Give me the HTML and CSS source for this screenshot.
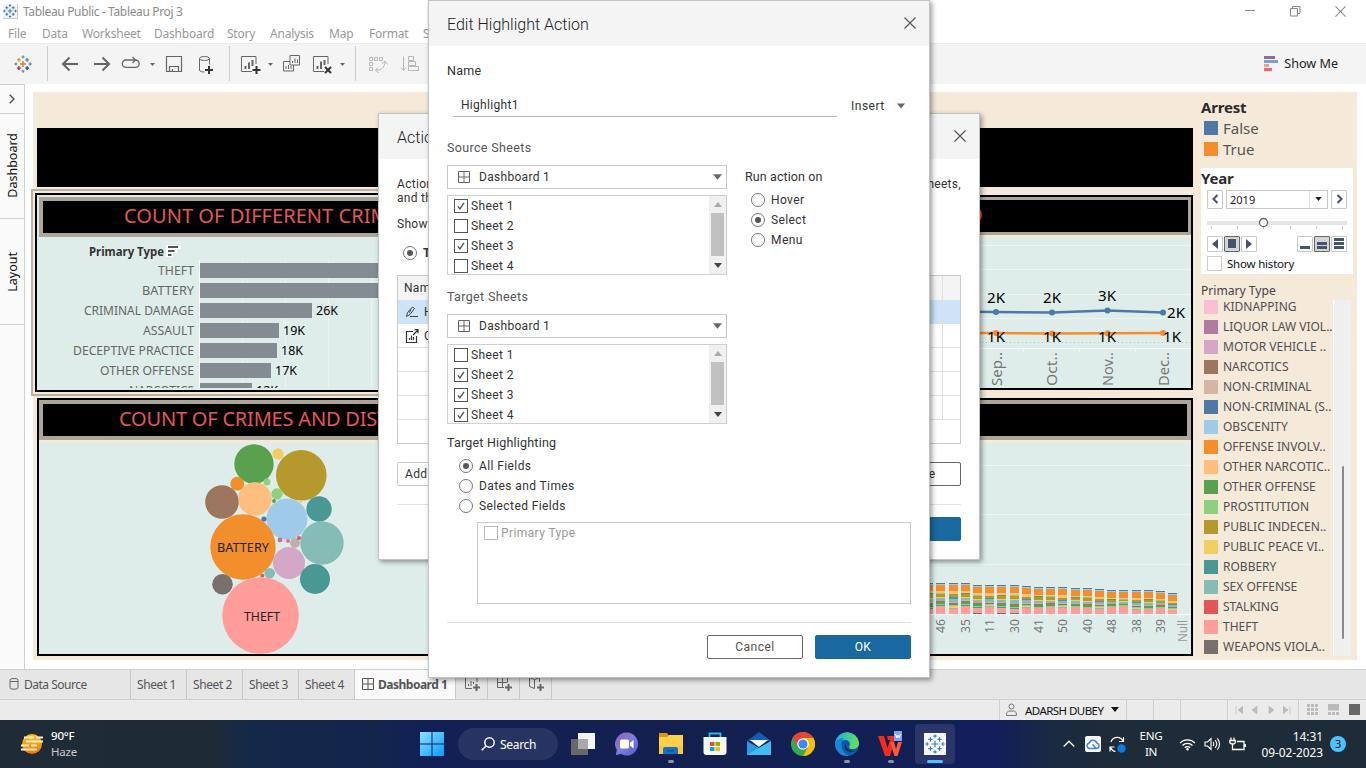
FILE: index.html
```html
<!DOCTYPE html>
<html lang="en">
<head>
<meta charset="utf-8">
<title>Tableau Public - Tableau Proj 3</title>
<link rel="stylesheet" href="styles.css">
</head>
<body>
<svg class="sprite" width="0" height="0">
  <symbol id="i-close" viewBox="0 0 12 12"><path d="M.5.5l11 11M11.5.5l-11 11" fill="none" stroke="currentColor" stroke-width="1.1"/></symbol>
  <symbol id="i-grid" viewBox="0 0 12 12"><path d="M.5.5h11v11H.5zM6 .5v11M.5 6h11" fill="none" stroke="currentColor"/></symbol>
  <symbol id="i-tri" viewBox="0 0 8 5"><path d="M0 0h8L4 5z" fill="currentColor"/></symbol>
  <symbol id="i-check" viewBox="0 0 14 14"><path d="M3.3 7.4l2.4 3 4.8-7" fill="none" stroke="#555" stroke-width="1.6"/></symbol>
  <symbol id="i-flake" viewBox="0 0 24 24">
    <path d="M12 8v8M8 12h8" class="c1"/><path d="M6.500 4v5M4 6.500h5" class="c2"/><path d="M17.500 4v5M15 6.500h5" class="c3"/>
    <path d="M6.500 15v5M4 17.500h5" class="c4"/><path d="M17.500 15v5M15 17.500h5" class="c5"/>
    <path d="M12 .5v4M10 2.500h4" class="c6"/><path d="M12 19.500v4M10 21.500h4" class="c7"/><path d="M2.500 10v4M.5 12h4" class="c6"/><path d="M21.500 10v4M19.500 12h4" class="c7"/>
  </symbol>
</svg>

<div class="app">
  <header class="titlebar">
    <svg class="app-icon flake-blue" width="15" height="15"><use href="#i-flake"/></svg>
    <span class="app-title">Tableau Public - Tableau Proj 3</span>
    <div class="win-controls">
      <svg width="12" height="12" viewBox="0 0 12 12"><path d="M0 4.500h10" stroke="#888"/></svg>
      <svg width="12" height="12" viewBox="0 0 12 12"><path d="M.5 2.500h7v7.500h-7zM2.500 2.500V.5h7.500V7.500h-2.500" fill="none" stroke="#888"/></svg>
      <svg class="grey" width="11" height="11"><use href="#i-close"/></svg>
    </div>
  </header>
  <nav class="menubar"><span>File</span><span>Data</span><span>Worksheet</span><span>Dashboard</span><span>Story</span><span>Analysis</span><span>Map</span><span>Format</span><span>Server</span></nav>

  <div class="toolbar">
    <svg class="flake-multi" width="18" height="18"><use href="#i-flake"/></svg>
    <i class="sep s1"></i>
    <svg class="tool w32" viewBox="0 0 32 24"><path d="M24 12H9M15.500 5.500L9 12l6.500 6.500" stroke-width="2"/></svg>
    <svg class="tool w32" viewBox="0 0 32 24"><path d="M8 12h15M16.500 5.500L23 12l-6.500 6.500" stroke-width="2"/></svg>
    <svg class="tool w44" viewBox="3 0 44 24"><path d="M15 8h-4a3.700 3.700 0 0 0 0 7.400h9.500a3.700 3.700 0 0 0 0-7.400H15M17.500 5l3 3-3 3" stroke-width="1.300"/><path class="fill" d="M35 11h5l-2.500 3z"/></svg>
    <svg class="tool w32" viewBox="3 0 32 24"><path d="M7.500 4.500h15v15h-15zM10.500 19v-4.500h9V19M13.500 17v2" stroke-width="1.200"/></svg>
    <svg class="tool w35" viewBox="3 0 35 24"><ellipse cx="13.500" cy="6.500" rx="5" ry="2"/><path d="M8.500 6.500v11.500c0 1.500 2 2 5 2M18.500 6.500v6"/><path class="dark" d="M18 14v8M14 18h8"/></svg>
    <i class="sep"></i>
    <svg class="tool w48" viewBox="0 0 48 24"><path d="M26 12V4.500H11.500v15H22"/><path d="M15.500 17v-3M19 17v-6.500M22.500 14V8" stroke-width="2"/><path class="dark" d="M26.500 14v8M22.500 18h8"/><path class="fill" d="M38 11h5l-2.500 3z"/></svg>
    <svg class="tool w28" viewBox="0 0 28 24"><path d="M12 3.500h9.500v9.500H12zM12 9.500H5.500v9.500h10v-6M14.500 11V9M17 11V6.500M19.500 11V7.500M8 17v-3M10.500 17v-4M13 17v-3"/></svg>
    <svg class="tool w49" viewBox="1 0 49 24"><path d="M23 12V4.500H8.500v15H19"/><path d="M12.500 17v-3M16 17V9.500M19.500 13V8" stroke-width="2"/><path class="dark" d="M20 15l6 6M26 15l-6 6"/><path class="fill" d="M35 11h5l-2.500 3z"/></svg>
    <i class="sep"></i>
    <svg class="tool off w38" viewBox="0 0 38 24"><path d="M13.500 5.500h3v3h-3zM18.500 5.500h3v3h-3zM23.500 5.500h3v3h-3zM13.500 10.500h3v3h-3zM13.500 15.500h3v3h-3zM20 18c6 0 8-2 9-8M26 12l3-3 2.500 3.500M22 15.500L19.500 18l3 3"/></svg>
    <svg class="tool off w32" viewBox="0 0 32 24"><path d="M9.500 4.500v14M7 15.500L9.500 18.500l2.500-3M14.500 4.500h5v4h-5zM14.500 9.500h7v4h-7zM14.500 14.500h10v4h-10z"/></svg>
    <div class="showme">
      <svg width="14" height="15" viewBox="0 0 14 15"><path fill="#8a6d9b" d="M0 0h11v3H0z"/><path fill="#7f9fcb" d="M0 4h14v3H0z"/><path fill="#f0a57e" d="M0 8h5v3H0z"/><path fill="#f0647c" d="M0 12h8v3H0z"/></svg>
      <span>Show Me</span>
    </div>
  </div>

  <main class="workspace">
    <aside class="side">
      <div class="side-toggle"><svg width="6" height="10" viewBox="0 0 6 10"><path d="M.7.7L5 5 .7 9.300" fill="none" stroke="#555" stroke-width="1.500"/></svg></div>
      <div class="side-tab"><span>Dashboard</span></div>
      <div class="side-tab"><span>Layout</span></div>
    </aside>
    <div class="canvas">
      <div class="board">
        <section class="zones">
          <div class="banner"></div>
          <div class="zone-grid">
            <div class="selected">
              <article class="panel inset">
                <h2 class="ptitle t1">COUNT OF DIFFERENT CRIMES</h2>
                <svg class="chart" id="bars" width="627" height="151" viewBox="39 237 627 151"></svg>
              </article>
            </div>
            <article class="panel p2">
              <h2 class="ptitle thin"><span>MONTHLY ARREST TREND</span></h2>
              <svg class="chart" id="lines" width="521" height="150" viewBox="670 238 521 150"></svg>
            </article>
            <article class="panel p3">
              <h2 class="ptitle t3">COUNT OF CRIMES AND DISTRICT</h2>
              <svg class="chart" id="bubbles" width="625" height="211" viewBox="39 443 625 211"></svg>
            </article>
            <article class="panel p4">
              <h2 class="ptitle"></h2>
              <svg class="chart" id="stack" width="521" height="211" viewBox="670 443 521 211"></svg>
            </article>
          </div>
        </section>
        <aside class="legend">
          <h3>Arrest</h3>
          <div class="key big"><i class="blue"></i>False</div>
          <div class="key big"><i class="orange"></i>True</div>
          <div class="year">
            <h3>Year</h3>
            <div class="yrow">
              <button class="b"><svg width="7" height="10" viewBox="0 0 7 10"><path d="M5.500 1l-4 4 4 4" fill="none" stroke="#44546d" stroke-width="2"/></svg></button>
              <div class="ysel"><span>2019</span><b><svg width="7" height="4"><use href="#i-tri"/></svg></b></div>
              <button class="b"><svg width="7" height="10" viewBox="0 0 7 10"><path d="M1.500 1l4 4-4 4" fill="none" stroke="#44546d" stroke-width="2"/></svg></button>
            </div>
            <svg class="slider" width="140" height="13" viewBox="0 0 140 13"><path fill="#e6e6e6" d="M0 4h140v4H0z"/><path stroke="#c4c4c4" d="M4.500 9v3M30.500 9v3M56.500 9v3M83.500 9v3M109.500 9v3M135.500 9v3"/><circle cx="56.500" cy="5.500" r="4" fill="#fff" stroke="#666" stroke-width="1.300"/></svg>
            <div class="play">
              <button class="b"><svg width="6" height="10"><path d="M6 0v10L0 5z" fill="#44546d"/></svg></button>
              <button class="b on"><svg width="8" height="9"><path d="M0 0h8v9H0z" fill="#44546d"/></svg></button>
              <button class="b"><svg width="6" height="10"><path d="M0 0v10l6-5z" fill="#44546d"/></svg></button>
              <button class="b push"><svg width="10" height="11"><path d="M0 8h10v3H0z" fill="#44546d"/></svg></button>
              <button class="b on"><svg width="10" height="11"><path d="M0 4h10v3H0zM0 8h10v3H0z" fill="#44546d"/></svg></button>
              <button class="b"><svg width="10" height="11"><path d="M0 0h10v3H0zM0 4h10v3H0zM0 8h10v3H0z" fill="#44546d"/></svg></button>
            </div>
            <div class="hist"><i></i><span>Show history</span></div>
          </div>
          <h4>Primary Type</h4>
          <div class="types"><div class="type-list" id="types"></div><div class="type-scroll"><i></i></div></div>
        </aside>
      </div>
    </div>
  </main>

  <div class="tabs">
    <div class="tab src"><svg width="10" height="12" viewBox="0 0 10 12"><rect x="1" y=".6" width="8" height="10.500" rx="2" fill="none" stroke="#666"/><path d="M1 3.500h8" stroke="#666"/></svg><span>Data Source</span></div>
    <div class="tab">Sheet 1</div><div class="tab">Sheet 2</div><div class="tab">Sheet 3</div><div class="tab">Sheet 4</div>
    <div class="tab active"><svg width="12" height="12"><use href="#i-grid"/></svg><span>Dashboard 1</span></div>
    <div class="tab new"><svg width="18" height="18" viewBox="0 0 18 18"><path d="M14 7V2.500H2.500v11H9M5.500 11V9M8 11V6M10.500 9V7" fill="none" stroke="#666"/><path d="M13.500 9v7M10 12.500h7" stroke="#666" stroke-width="2"/></svg></div>
    <div class="tab new"><svg width="18" height="18" viewBox="0 0 18 18"><path d="M12.500 7V2.500H2.500v10H9M2.500 7.500h10M7.500 2.500v10" fill="none" stroke="#666"/><path d="M13.500 9v7M10 12.500h7" stroke="#666" stroke-width="2"/></svg></div>
    <div class="tab new"><svg width="18" height="18" viewBox="0 0 18 18"><path d="M12.500 7V2.500L7.500 4.500 2.500 2.500v9l5 2V4.500" fill="none" stroke="#666"/><path d="M13.500 9v7M10 12.500h7" stroke="#666" stroke-width="2"/></svg></div>
  </div>

  <footer class="status">
    <div class="cell user"><svg width="11" height="14" viewBox="0 0 11 14"><circle cx="5.500" cy="3.500" r="2.500" fill="none" stroke="#777"/><path d="M.6 12.500V11c0-2 1.500-3 3.500-3h3c2 0 3.300 1 3.300 3v1.500z" fill="none" stroke="#777"/></svg><span>ADARSH DUBEY</span><svg width="8" height="5"><use href="#i-tri"/></svg></div>
    <div class="cell c27"></div><div class="cell c27"></div><div class="cell c47"></div>
    <div class="cell nav">
      <svg viewBox="0 0 8 8"><path d="M1 0v8M8 0v8L3 4z" /></svg><svg viewBox="0 0 8 8"><path d="M6 0v8L1 4z"/></svg><svg viewBox="0 0 8 8"><path d="M2 0v8l5-4z"/></svg><svg viewBox="0 0 8 8"><path d="M7 0v8M0 0v8l5-4z"/></svg>
    </div>
    <div class="cell views">
      <svg width="11" height="11" viewBox="0 0 11 11"><path fill="#bbb" d="M0 0h3v3H0zM4 0h3v3H4zM8 0h3v3H8zM0 4h3v3H0zM4 4h3v3H4zM8 4h3v3H8zM0 8h3v3H0zM4 8h3v3H4zM8 8h3v3H8z"/></svg>
      <svg width="11" height="11" viewBox="0 0 11 11"><path fill="#bbb" d="M0 0h11v6.500H0zM0 8h3v3H0zM4 8h3v3H4zM8 8h3v3H8z"/></svg>
      <svg width="11" height="11" viewBox="0 0 11 11"><path fill="#666" d="M0 0h11v11H0z"/></svg>
    </div>
  </footer>

  <div class="taskbar">
    <div class="weather">
      <svg width="26" height="22" viewBox="0 0 26 22"><defs><linearGradient id="sun" x1="0" y1="0" x2="0" y2="1"><stop offset="0" stop-color="#ffc21a"/><stop offset="1" stop-color="#f0720c"/></linearGradient></defs><circle cx="13" cy="11" r="10" fill="url(#sun)"/><path d="M5 4.500h10M17 4.500h7M7 8.500h17M2 12.500h8M12 12.500h6M2 16.500h16" stroke="#fff1c8" stroke-width="2"/></svg>
      <div><b>90°F</b><span>Haze</span></div>
    </div>
    <div class="dock">
      <div class="slot start"><svg width="24" height="24" viewBox="0 0 24 24"><defs><linearGradient id="win" x1="0" y1="0" x2="1" y2="1"><stop offset="0" stop-color="#8be0ff"/><stop offset="1" stop-color="#0a9bff"/></linearGradient></defs><path fill="url(#win)" d="M0 0h11.500v11.500H0zM12.500 0H24v11.500H12.500zM0 12.500h11.500V24H0zM12.500 12.500H24V24H12.500z"/></svg></div>
      <div class="search"><svg width="14" height="14" viewBox="0 0 14 14"><circle cx="8.500" cy="5.500" r="4.700" fill="none" stroke="#fff" stroke-width="1.500"/><path d="M5 9l-4.300 4.300" stroke="#fff" stroke-width="1.600"/></svg><span>Search</span></div>
      <div class="slot"><svg width="24" height="24" viewBox="0 0 24 24"><path fill="#f4f4f4" d="M7 1h17v16H7z"/><path fill="#686868" d="M0 7h17v16H0z"/><path fill="#aaa" d="M7 7h10v10H7z"/></svg></div>
      <div class="slot"><svg width="24" height="24" viewBox="0 0 24 24"><defs><linearGradient id="chat" x1="0" y1="0" x2="1" y2="1"><stop offset="0" stop-color="#9a5bb5"/><stop offset=".5" stop-color="#7d7fe0"/><stop offset="1" stop-color="#5157c4"/></linearGradient></defs><path fill="url(#chat)" d="M12 .5a11.500 11.500 0 1 1-6 21.500L.8 23l1-5A11.500 11.500 0 0 1 12 .5z"/><rect x="5" y="7.500" width="9" height="9" rx="1.500" fill="#fff"/><path fill="#fff" d="M15 11l3.500-3v8.500L15 13.500z"/></svg></div>
      <div class="slot run"><svg width="24" height="24" viewBox="0 0 24 24"><path fill="#d89a0b" d="M0 1h8l2 3v5H0z"/><path fill="#ffd04a" d="M0 5h8l2-2h14v19H0z"/><path fill="#ffbc2e" d="M0 14h24v8H0z" opacity=".5"/><path fill="#1173c6" d="M4 22v-5q0-2 2-2h11q2 0 2 2v5z"/><path fill="#0b5596" d="M8 18h7v1.500H8z"/></svg></div>
      <div class="slot"><svg width="24" height="24" viewBox="0 0 24 24"><path d="M6.500 6V1.500h11V6" fill="none" stroke="#2cb7ee" stroke-width="1.800"/><path fill="#f7f7f7" d="M.5 5h23v15q0 3-3 3h-17q-3 0-3-3z"/><path fill="#f25022" d="M7 10h4.500v4H7z"/><path fill="#7fba00" d="M12.500 10H17v4h-4.500z"/><path fill="#00a4ef" d="M7 15h4.500v4H7z"/><path fill="#ffb900" d="M12.500 15H17v4h-4.500z"/></svg></div>
      <div class="slot"><svg width="24" height="24" viewBox="0 0 24 24"><path fill="#1160b0" d="M12 0l12 9H0z"/><path fill="#2a9be5" d="M0 9l12 7L24 9v14H0z"/><path fill="#41bdf2" d="M0 23L24 9v14z"/><path fill="#fff" d="M3 8h18l-9 7z"/></svg></div>
      <div class="slot"><svg width="24" height="24" viewBox="0 0 24 24"><circle cx="12" cy="12" r="12" fill="#34a853"/><path fill="#fbbc05" d="M12 12V6h10.400A12 12 0 0 1 12 24l5.200-9z"/><path fill="#ea4335" d="M1.600 6L7 15l5-9h10.400A12 12 0 0 0 1.600 6z"/><circle cx="12" cy="12" r="5.800" fill="#fff"/><circle cx="12" cy="12" r="4.600" fill="#4285f4"/></svg></div>
      <div class="slot run"><svg width="24" height="24" viewBox="0 0 24 24"><defs><linearGradient id="edge" x1="0" y1="0" x2="1" y2=".3"><stop offset="0" stop-color="#22a7ec"/><stop offset="1" stop-color="#62e05a"/></linearGradient></defs><circle cx="12" cy="12" r="12" fill="#0c5cab"/><path fill="url(#edge)" d="M.3 10A12 12 0 0 1 24 11c0 4-3 6-6.500 6-3 0-4-1.300-3-3 1.500-3-.5-6-4-6-5 0-8 3-9.500 7z"/><path fill="#1b86d8" d="M0 12c1-4 5-6.500 9-5.500C5 9 5 20 14 23.800A12 12 0 0 1 0 12z"/><path fill="#13264f" d="M11 11c-1 4 2 9 10 7.500-2 1-9 3-11-2-.8-2 0-4.500 1-5.500z"/></svg></div>
      <div class="slot run"><svg width="28" height="26" viewBox="0 0 28 26"><path fill="#f32a1e" d="M1 5h6l3.500 12L13 9h-2l-1-4h9l-6 20H8z"/><path fill="#ff5a32" d="M13 11l4.500 14h3L25 11h-4l-2 7-2-7z"/><path fill="#7ea6f5" d="M17 0h8v10h-8z"/><path d="M18.500 3l1.300 4L21 4l1.300 3 1.200-4" fill="none" stroke="#fff"/></svg></div>
      <div class="slot active"><svg class="flake-blue tile" width="22" height="22"><use href="#i-flake"/></svg></div>
    </div>
    <div class="tray">
      <svg class="chev" width="12" height="8" viewBox="0 0 12 8"><path d="M.7 6.500L6 1.200l5.300 5.300" fill="none" stroke="#fff" stroke-width="1.300"/></svg>
      <svg width="16" height="16" viewBox="0 0 16 16"><rect width="16" height="16" rx="2" fill="#fff"/><path d="M4.500 12.500h7a2.700 2.700 0 0 0 .5-5.300A4 4 0 0 0 4.300 7a2.800 2.800 0 0 0 .2 5.500zM11 12L7.500 8.500" fill="none" stroke="#3b82f0" stroke-width="1.500"/></svg>
      <svg width="17" height="17" viewBox="0 0 17 17"><path d="M2 6a6.500 6.500 0 0 1 12-1M14.500 1v4.500H10M1 15.500V11h4.500M1.500 11.500q1.500 3.500 5 4" fill="none" stroke="#fff" stroke-width="1.200"/><circle cx="12.500" cy="12.500" r="4.200" fill="#0a7ce0"/></svg>
      <div class="lang">ENG<br>IN</div>
      <svg width="17" height="13" viewBox="0 0 17 13"><path d="M1 5a10.500 10.500 0 0 1 15 0M3.500 7.500a7 7 0 0 1 10 0M5.800 9.800a3.800 3.800 0 0 1 5.400 0" fill="none" stroke="#fff" stroke-width="1.300"/><circle cx="8.500" cy="11.300" r="1.200" fill="#fff"/></svg>
      <svg width="17" height="14" viewBox="0 0 17 14"><path d="M1 5h2.500L7 1.500v11L3.500 9H1zM9 5q1.500 2 0 4M11.200 3.200q3 3.800 0 7.600M13.300 1.300q4.500 5.700 0 11.400" fill="none" stroke="#fff" stroke-width="1.100"/></svg>
      <svg width="17" height="14" viewBox="0 0 17 14"><path d="M2 .5v3M5 .5v3M.8 3.500h5.500V5q0 2-2.700 2t-2.800-2zM3.500 7v5.500H15v-8H8M16.300 7v3" fill="none" stroke="#fff" stroke-width="1.300"/></svg>
      <div class="clock">14:31<br>09-02-2023</div>
      <span class="count">3</span>
    </div>
  </div>
</div>

<div class="dialog actions">
  <div class="dlg-head"><span>Actions</span><svg width="12" height="12"><use href="#i-close"/></svg></div>
  <div class="act-body">
    <p class="intro"><span>Actions allow you to create interactive relationships</span><span>between sheets,</span></p>
    <p class="intro">and the web.</p>
    <p class="show">Show actions for:</p>
    <div class="radio strong"><i class="r on"></i>This workbook</div>
    <div class="table">
      <div class="tr th"><span>Name</span><i></i></div>
      <div class="tr sel"><svg width="14" height="12" viewBox="0 0 14 12"><path d="M1.500 10.500l1-4 5-5.500 2 1.500-4.500 6-3.500 2zM5 10.500h8M6 3.500L4 7" fill="none" stroke="#444"/></svg><span>Highlight1</span><i></i></div>
      <div class="tr"><svg width="14" height="14" viewBox="0 0 14 14"><path d="M8 2.500H1.500v11h10V7M4.500 11V9M6.500 11V6.500M8.500 11V8M8 6l5-5M9.500.7H13v3.500" fill="none" stroke="#333" stroke-width="1.200"/></svg><span>Go to sheet</span><i></i></div>
      <div class="tr"><i></i></div><div class="tr"><i></i></div><div class="tr"><i></i></div><div class="tr last"></div>
    </div>
    <div class="act-btns"><span class="btn lite">Add Action</span><span class="btn">Remove</span></div>
    <div class="act-foot"><span class="btn primary"></span></div>
  </div>
</div>

<div class="dialog edit">
  <div class="dlg-head"><span>Edit Highlight Action</span><svg width="12" height="12"><use href="#i-close"/></svg></div>
  <div class="edit-body">
    <label class="lbl name">Name</label>
    <div class="name-row"><div class="field">Highlight1</div><span class="insert">Insert</span><svg width="8" height="6"><use href="#i-tri"/></svg></div>
    <label class="lbl dim src-l">Source Sheets</label>
    <div class="cols">
      <div class="picker">
        <div class="combo"><svg width="12" height="12"><use href="#i-grid"/></svg><span>Dashboard 1</span><svg width="9" height="6"><use href="#i-tri"/></svg></div>
        <div class="list"><div class="items">
          <div class="item"><svg class="cb" width="14" height="14"><use href="#i-check"/></svg>Sheet 1</div>
          <div class="item"><svg class="cb" width="14" height="14"></svg>Sheet 2</div>
          <div class="item"><svg class="cb" width="14" height="14"><use href="#i-check"/></svg>Sheet 3</div>
          <div class="item"><svg class="cb" width="14" height="14"></svg>Sheet 4</div>
        </div><div class="scroll"><svg class="up" width="8" height="5"><use href="#i-tri"/></svg><i></i><svg width="8" height="5"><use href="#i-tri"/></svg></div></div>
      </div>
      <div class="run-on"><span class="lbl">Run action on</span>
        <div class="radio"><i class="r"></i>Hover</div><div class="radio"><i class="r on"></i>Select</div><div class="radio"><i class="r"></i>Menu</div>
      </div>
    </div>
    <label class="lbl dim tgt-l">Target Sheets</label>
    <div class="picker">
      <div class="combo"><svg width="12" height="12"><use href="#i-grid"/></svg><span>Dashboard 1</span><svg width="9" height="6"><use href="#i-tri"/></svg></div>
      <div class="list"><div class="items">
        <div class="item"><svg class="cb" width="14" height="14"></svg>Sheet 1</div>
        <div class="item"><svg class="cb" width="14" height="14"><use href="#i-check"/></svg>Sheet 2</div>
        <div class="item"><svg class="cb" width="14" height="14"><use href="#i-check"/></svg>Sheet 3</div>
        <div class="item"><svg class="cb" width="14" height="14"><use href="#i-check"/></svg>Sheet 4</div>
      </div><div class="scroll"><svg class="up" width="8" height="5"><use href="#i-tri"/></svg><i></i><svg width="8" height="5"><use href="#i-tri"/></svg></div></div>
    </div>
    <label class="lbl hl-l">Target Highlighting</label>
    <div class="hl-opts">
      <div class="radio"><i class="r on"></i>All Fields</div><div class="radio"><i class="r"></i>Dates and Times</div><div class="radio"><i class="r"></i>Selected Fields</div>
    </div>
    <div class="fields"><div class="item"><svg class="cb" width="14" height="14"></svg>Primary Type</div></div>
    <div class="edit-foot"><span class="btn cancel">Cancel</span><span class="btn primary">OK</span></div>
  </div>
</div>
<script src="charts.js"></script>
</body>
</html>
```
FILE: styles.css
```css
* { box-sizing: border-box; }
body { margin: 0; width: 1366px; height: 768px; overflow: hidden; position: relative; font-family: "Noto Sans", "Open Sans", sans-serif; font-size: 12px; color: #333; background: #fff; }
svg { display: block; flex: none; }
.sprite { position: absolute; }
h2, h3, h4, p { margin: 0; }
.app { display: flex; flex-direction: column; height: 768px; }

.c1 { stroke: var(--c1); } .c2 { stroke: var(--c2); } .c3 { stroke: var(--c3); } .c4 { stroke: var(--c4); }
.c5 { stroke: var(--c5); } .c6 { stroke: var(--c6); } .c7 { stroke: var(--c7); }
.flake-blue { --c1: #3481b5; --c2: #3481b5; --c3: #3481b5; --c4: #3481b5; --c5: #3481b5; --c6: #3481b5; --c7: #3481b5; stroke-width: 1.9; }
.flake-multi { --c1: #e8762d; --c2: #eb912c; --c3: #59879b; --c4: #c72037; --c5: #1f457e; --c6: #5b9fa8; --c7: #7a83b5; stroke-width: 1.9; }

.titlebar { height: 24px; display: flex; align-items: center; padding: 0 20px 0 3px; color: #8c8c8c; }
.app-icon { border-right: 1px solid #ccc; border-bottom: 1px solid #ccc; background: #f4f4f4; }
.app-title { margin-left: 5px; letter-spacing: -.35px; }
.win-controls { margin-left: auto; display: flex; gap: 33px; align-items: center; height: 20px; }
.grey { color: #888; }
.menubar { height: 19px; display: grid; grid-template-columns: 34px 40px 72px 73px 43px 59px 40px 54px auto; padding-left: 8px; line-height: 19px; color: #999; letter-spacing: -.22px; }

.toolbar { height: 41px; background: #f4f4f4; border-top: 1px solid #ececec; display: flex; align-items: center; padding: 0 28px 0 14px; }
.sep { width: 1px; height: 35px; background: #cfcfcf; }
.s1 { margin-left: 15px; margin-right: 6px; }
.tool { height: 24px; fill: none; stroke: #666; }
.tool .fill { fill: #666; stroke: none; }
.tool .dark { stroke: #333; stroke-width: 2; }
.tool.off { stroke: #b8b8b8; }
.w28 { width: 28px; } .w32 { width: 32px; } .w35 { width: 35px; } .w38 { width: 38px; } .w44 { width: 44px; } .w48 { width: 48px; } .w49 { width: 49px; }
.showme { margin-left: auto; display: flex; align-items: center; gap: 6px; color: #222; font-size: 12.600px; }

.workspace { height: 585px; display: flex; }
.side { width: 25px; background: #fafafa; border-right: 1px solid #d0d0d0; border-top: 1px solid #d0d0d0; }
.side-toggle { height: 29px; border-bottom: 1px solid #d0d0d0; display: flex; align-items: center; padding-left: 9px; }
.side-tab { height: 105px; border-bottom: 1px solid #d0d0d0; display: flex; align-items: center; justify-content: center; color: #111; font-size: 12.500px; }
.side-tab + .side-tab { height: 106px; padding-top: 2px; }
.side-tab span { writing-mode: vertical-rl; transform: rotate(180deg); }
.canvas { flex: 1; padding: 8px 9px 9px 8px; }
.board { height: 568px; background: #f5e9d9; display: flex; }
.zones { width: 1160px; padding-top: 36px; }
.banner { height: 59px; width: 1156px; margin-left: 4px; background: #000; }
.zone-grid { display: grid; grid-template-columns: 635px 525px; grid-template-rows: 209px 258px; width: 1160px; margin-top: 2px; }
.selected { border: 2px solid #b9b2a9; margin-left: -2px; height: 207px; padding: 2px; }
.panel { border: 2px solid #000; background: #dfedea; overflow: hidden; }
.inset { height: 199px; padding: 2px; }
.p2 { margin-top: 6px; height: 195px; }
.p3 { margin-left: 4px; height: 258px; }
.p4 { height: 258px; }
.ptitle { height: 40px; border: 4px solid #aba697; background: #000; color: #e4575a; font-size: 20px; font-weight: 400; line-height: 29px; letter-spacing: .05px; white-space: nowrap; overflow: hidden; }
.p3 .ptitle, .p4 .ptitle { box-shadow: 0 3px 0 #f5e9d9; margin-bottom: 3px; }
.t1 { padding-left: 81px; }
.p3 .t3 { padding-left: 76px; letter-spacing: -.2px; }
.thin { height: 38px; border-width: 3px; box-shadow: 0 3px 0 #f5e9d9; margin-bottom: 3px; text-align: right; padding-right: 205px; }

.legend { width: 164px; padding: 5px 4px 0 8px; color: #555; }
.legend h3 { font-size: 15px; line-height: 20px; height: 21px; color: #2b2b2b; letter-spacing: -.2px; }
.legend h4 { font-size: 12.100px; font-weight: 400; color: #444; height: 26px; line-height: 34px; }
.key { display: flex; align-items: center; height: 20px; padding-left: 3px; white-space: nowrap; }
.key i { width: 14px; height: 14px; margin-right: 5px; flex: none; }
.legend .big { height: 21px; font-size: 15px; }
.blue { background: #4e79a7; } .orange { background: #f28e2b; }
.year { margin-top: 8px; width: 152px; height: 106px; background: #fff; padding: 0 6px 0; }
.legend .year h3 { margin-left: -6px; height: 22px; line-height: 21px; }
.yrow { display: flex; gap: 3px; }
.b { width: 16px; height: 16px; border: 1px solid #c9c9c9; background: #fff; padding: 0; display: flex; align-items: center; justify-content: center; border-radius: 1px; }
.yrow .b { height: 19px; }
.b.on { background: #d4d4d4; border-color: #666; }
.ysel { flex: 1; height: 19px; border: 1px solid #c9c9c9; display: flex; color: #222; font-size: 11px; line-height: 17px; padding-left: 3px; }
.ysel b { margin-left: auto; width: 18px; border-left: 1px solid #ddd; display: flex; align-items: center; justify-content: center; }
.slider { margin: 8px 0 6px; }
.play { display: flex; gap: 1px; }
.push { margin-left: auto; }
.hist { display: flex; align-items: center; gap: 5px; margin-top: 4px; color: #111; font-size: 11.500px; letter-spacing: -.2px; }
.hist i { width: 15px; height: 15px; border: 1px solid #ccc; }
.types { display: flex; height: 356px; overflow: hidden; }
.type-list { width: 132px; margin-top: -3px; font-size: 12px; }
.type-list .key { color: #505050; }
.type-scroll { width: 18px; background: #efefef; border-left: 1px solid #fff; padding: 166px 0 0 8px; }
.type-scroll i { display: block; width: 2px; height: 173px; background: #8a8a8a; border-radius: 1px; }

.tabs { height: 31px; background: #e6e6e6; border-top: 1px solid #cfcfcf; border-bottom: 1px solid #cfcfcf; display: flex; color: #555; }
.tab { width: 56px; border-right: 1px solid #c8c8c8; line-height: 29px; letter-spacing: -.4px; display: flex; align-items: center; padding-left: 6px; white-space: nowrap; }
.src { width: 131px; gap: 5px; padding-left: 9px; letter-spacing: -.5px; }
.active.tab { width: 101px; background: #fafafa; font-weight: 700; gap: 4px; letter-spacing: -.5px; padding-left: 7px; }
.tab.new { width: 32px; padding-left: 7px; }
.status { height: 21px; background: #ebebeb; display: flex; justify-content: flex-end; }
.cell { border-left: 1px solid #d0d0d0; display: flex; align-items: center; }
.user { width: 127px; padding-left: 6px; color: #111; font-size: 11.500px; letter-spacing: -.55px; }
.user span { margin: 2px 8px 0 8px; }
.c27 { width: 27px; } .c47 { width: 47px; }
.nav { width: 71px; padding-left: 7px; gap: 8px; }
.nav svg { width: 8px; height: 8px; fill: #bbb; stroke: #bbb; stroke-width: .6; }
.views { width: 68px; padding-left: 8px; gap: 10px; }

.taskbar { height: 48px; color: #fff; display: flex; align-items: center; background: linear-gradient(90deg, #1f2b36 0, #1e2b37 215px, #14284a 250px, #12264c 370px, #122055 430px, #13204f 700px, #121f5a 1000px, #1a2a42 1050px, #1e2b38 1120px, #1e2b38 100%); }
.weather { width: 420px; padding-left: 19px; display: flex; align-items: center; gap: 6px; font-size: 11.500px; line-height: 16px; letter-spacing: -.2px; }
.weather b { font-weight: 500; display: block; }
.weather span { color: #ccc; }
.dock { display: flex; align-items: center; width: 535px; flex: none; }
.slot { width: 44px; height: 40px; display: flex; align-items: center; justify-content: center; position: relative; flex: none; }
.slot.start { width: 38px; justify-content: flex-start; }
.slot.run::after, .slot.active::after { content: ""; position: absolute; bottom: 1px; width: 6px; height: 3px; border-radius: 2px; background: #8b93a8; }
.slot.active { width: 40px; background: rgba(255,255,255,.1); border-radius: 4px; margin-left: 2px; }
.slot.active::after { width: 16px; background: #4cc2ff; }
.tile { background: #f5f5f5; stroke-width: 1.400; padding: 1px; }
.search { width: 100px; height: 32px; border-radius: 16px; background: rgba(255,255,255,.09); display: flex; align-items: center; gap: 5px; padding-left: 23px; margin-right: 3px; font-size: 12px; letter-spacing: -.3px; }
.tray { margin-left: auto; display: flex; align-items: center; padding-right: 20px; font-size: 11.900px; line-height: 16px; letter-spacing: -.05px; gap: 8px; }
.chev { margin-right: 2px; }
.lang { text-align: center; margin: 0 9px 0 6px; font-size: 11.600px; letter-spacing: -.3px; }
.clock { text-align: right; margin-left: 7px; margin-right: -1px; }
.count { width: 16px; height: 16px; border-radius: 8px; background: #4cc2ff; color: #111; text-align: center; font-size: 11px; }

.dialog { position: absolute; background: #fff; border: 1px solid #c3c3c3; box-shadow: 2px 2px 5px rgba(0,0,0,.4); font-family: Roboto, "Liberation Sans", sans-serif; color: #333; letter-spacing: .3px; font-size: 12px; }
.dlg-head { height: 45px; background: #f4f4f4; display: flex; align-items: center; justify-content: space-between; padding: 2px 13px 0 18px; font-size: 16px; font-weight: 300; color: #222; letter-spacing: 0; }
.dlg-head svg { color: #555; margin-top: -3px; }
.actions { left: 378px; top: 113px; width: 602px; height: 447px; }
.edit { left: 428px; top: 0; width: 502px; height: 678px; }
.act-body { padding: 18px; }
.intro { display: flex; justify-content: space-between; line-height: 14px; }
.show { line-height: 14px; margin-top: 12px; }
.radio { display: flex; align-items: center; height: 20px; }
.r { width: 14px; height: 14px; border: 1px solid #777; border-radius: 50%; margin-right: 6px; display: flex; align-items: center; justify-content: center; }
.r.on::after { content: ""; width: 6px; height: 6px; border-radius: 50%; background: #555; }
.strong { margin: 12px 0 12px 6px; font-weight: 700; }
.table { height: 169px; border: 1px solid #ccc; }
.tr { height: 24px; border-bottom: 1px solid #e3e3e3; display: flex; align-items: center; padding-left: 7px; gap: 5px; }
.tr i { margin-left: auto; width: 18px; height: 24px; border-left: 1px solid #e0e0e0; }
.tr.th { background: #f4f4f4; padding-left: 6px; border: 0; }
.tr.sel { background: #cde4f8; border: 0; }
.tr.last { border: 0; }
.btn { height: 24px; width: 96px; border: 1px solid #666; border-radius: 2px; display: flex; align-items: center; justify-content: center; }
.btn.cancel { color: #555; letter-spacing: .5px; }
.btn.lite { border-color: #ccc; justify-content: flex-start; padding-left: 7px; }
.btn.primary { background: #1a68a0; border-color: #1a68a0; color: #fff; }
.act-btns { display: flex; justify-content: space-between; margin-top: 18px; padding-bottom: 18px; border-bottom: 1px solid #e3e3e3; }
.act-foot { display: flex; justify-content: flex-end; margin-top: 12px; }

.edit-body { padding: 17px 18px 0; display: flex; flex-direction: column; }
.lbl { line-height: 16px; font-size: 12.500px; letter-spacing: .25px; }
.dim { color: #555; letter-spacing: .35px; }
.name-row { display: flex; align-items: center; margin: 15px 0 23px 6px; height: 23px; }
.field { width: 384px; height: 23px; border-bottom: 1px solid #bbb; padding: 4px 8px 0; }
.insert { margin: 0 12px 0 14px; width: 34px; letter-spacing: .5px; }
.name-row svg, .combo svg { color: #666; }
.src-l { margin-bottom: 9px; }
.cols { display: flex; gap: 18px; }
.picker { width: 280px; }
.combo { height: 24px; border: 1px solid #c8c8c8; display: flex; align-items: center; padding: 0 4px 0 10px; margin-bottom: 6px; }
.combo span { margin-left: 9px; flex: 1; }
.list { height: 80px; border: 1px solid #d0d0d0; display: flex; overflow: hidden; }
.items { flex: 1; }
.item { height: 20px; display: flex; align-items: center; padding-left: 6px; gap: 3px; }
.item, .radio { letter-spacing: .4px; }
.cb { border: 1px solid #555; }
.scroll { width: 17px; background: #f0f0f0; display: flex; flex-direction: column; align-items: center; padding-top: 6px; color: #444; }
.scroll .up { transform: rotate(180deg); color: #aaa; }
.scroll i { width: 13px; height: 43px; background: #c1c1c1; margin: 6px 0 7px; }
.run-on { display: flex; flex-direction: column; }
.run-on .lbl { margin: 4px 0 5px; letter-spacing: .1px; }
.run-on .radio { margin-left: 6px; }
.tgt-l { margin: 14px 0 9px; }
.hl-l { margin: 11px 0 5px; letter-spacing: .2px; }
.hl-opts { margin-left: 12px; }
.fields { height: 82px; margin: 6px 0 18px 30px; border: 1px solid #ccc; color: #999; }
.fields .cb { border-color: #bbb; }
.edit-foot { border-top: 1px solid #e0e0e0; padding-top: 12px; display: flex; gap: 12px; justify-content: flex-end; }

.chart { overflow: hidden; }
.chart text { font-family: "Noto Sans", sans-serif; }
```
FILE: charts.js
```js
const NS = "http://www.w3.org/2000/svg";
function add(id, tag, attrs, text) {
  const el = document.createElementNS(NS, tag);
  for (const k in attrs) el.setAttribute(k, attrs[k]);
  if (text) el.textContent = text;
  document.getElementById(id).appendChild(el);
}
function label(id, x, y, w, text, size, fill, anchor, extra) {
  add(id, "text", Object.assign({ x, y, textLength: w, lengthAdjust: "spacingAndGlyphs", "font-size": size, fill, "text-anchor": anchor || "start" }, extra || {}), text);
}

/* Horizontal bars per crime type */
[242.5, 285.5, 328.5, 371.5].forEach(x => add("bars", "path", { d: `M${x} 260V388`, stroke: "#edf3f1" }));
add("bars", "path", { d: "M199.5 260V388", stroke: "#fff" });
label("bars", 89, 256, 75, "Primary Type", 12.5, "#333", "start", { "font-weight": 700 });
add("bars", "path", { d: "M166 245h15v4h-4v4h-4v4h-7z", fill: "#fff" });
add("bars", "path", { d: "M168 247h10M168 251h6.500M168 255h3.500", stroke: "#555", "stroke-width": 2 });
[["THEFT", 36, 460], ["BATTERY", 52, 440], ["CRIMINAL DAMAGE", 110, 312, "26K"], ["ASSAULT", 51, 279, "19K"],
 ["DECEPTIVE PRACTICE", 121, 277, "18K"], ["OTHER OFFENSE", 94, 271, "17K"], ["NARCOTICS", 65, 252, "12K"]].forEach((r, i) => {
  const y = 263 + i * 20;
  add("bars", "rect", { x: 200, y, width: r[2] - 200, height: 15, fill: "#848b93" });
  label("bars", 194, y + 12, r[1], r[0], 12.5, "#666", "end");
  if (r[3]) label("bars", r[2] + 4, y + 12, 22, r[3], 12.5, "#000");
});

/* Monthly lines */
[245.5, 269.5, 294.5, 318.5].forEach(y => add("lines", "path", { d: `M670 ${y}H1191`, stroke: "#eff4f3" }));
add("lines", "path", { d: "M670 342.500H1191", stroke: "#bbb", "stroke-dasharray": "1 3" });
add("lines", "path", { d: "M670 348.500H1191M1023.500 348v4M1079.500 348v4M1135.500 348v4", stroke: "#f6f8f8" });
[["#4e79a7", [311.5, 312, 312.5, 310.5, 312.5]], ["#f28e2b", [333, 333, 333.5, 333.3, 333]]].forEach(([c, ys]) => {
  const xs = [940, 996, 1052, 1107.500, 1163];
  add("lines", "path", { d: "M" + xs.map((x, i) => x + " " + ys[i]).join("L"), fill: "none", stroke: c, "stroke-width": 2.500 });
  xs.forEach((x, i) => add("lines", "circle", { cx: x, cy: ys[i], r: 3, fill: c }));
});
[[996, 303, "2K"], [1052, 303, "2K"], [1107, 301, "3K"], [1176, 318, "2K"], [996, 342, "1K"], [1052, 342, "1K"], [1107, 342, "1K"], [1172, 342, "1K"]]
  .forEach(([x, y, t]) => label("lines", x, y, 18, t, 15, "#000", "middle"));
[[1002, "Sep.."], [1057, "Oct.."], [1113, "Nov.."], [1169, "Dec.."]]
  .forEach(([x, t]) => label("lines", 0, 0, 34, t, 14.5, "#777", "start", { transform: `translate(${x} 386) rotate(-90)` }));

/* Packed bubbles */
[[254,464,19.7,"#59a14f"],[278,454,5.7,"#f1ce63"],[301.3,475.3,25.3,"#b6992d"],[237.3,483.7,7,"#f28e2b"],[267,482,3.5,"#8cd17d"],
 [222,502,16.800,"#9d7660"],[240.500,494,2,"#a0cbe8"],[277,494,5.700,"#8cd17d"],[300.700,501.500,1.500,"#f1ce63"],[274,501,2,"#59a14f"],[319,509,12.700,"#499894"],[255,499,16.700,"#ffbe7d"],
 [287,519,20.500,"#a0cbe8"],[264,519,2.600,"#4e79a7"],[243,547,32.700,"#f28e2b"],[322,543,21.700,"#86bcb6"],[280,540,2.400,"#b07aa1"],
 [284,540.500,1.600,"#fabfd2"],[288,541,2,"#d37295"],[295,543,5,"#bab0ac"],[299,538,2,"#e15759"],[289,563,16,"#d4a6c8"],[315,579,15,"#499894"],
 [269.700,573.300,5.300,"#86bcb6"],[262.300,575.700,2,"#e15759"],[222.500,584.300,10.300,"#79706e"],[260.600,615.500,38.300,"#ff9d9a"]]
  .forEach(([cx, cy, r, fill]) => add("bubbles", "circle", { cx, cy, r, fill }));
label("bubbles", 243, 552, 52, "BATTERY", 12.500, "#222", "middle");
label("bubbles", 262, 621, 36, "THEFT", 12.500, "#222", "middle");

/* Stacked columns per ward */
[465.5, 514.5, 564.5].forEach(y => add("stack", "path", { d: `M670 ${y}H1191`, stroke: "#eff4f3" }));
add("stack", "path", { d: "M670 614.500H1191", stroke: "#fbfcfc" });
const xs = [924, 936, 949, 961, 973, 985, 997, 1010, 1022, 1034, 1046, 1058, 1071, 1083, 1095, 1107, 1119, 1132, 1144, 1156, 1168];
const tops = [583, 583, 583, 583, 585, 585, 585, 585, 586, 587, 587, 587, 588, 588, 589, 590, 590, 590, 590, 591, 593];
const feet = [609, 606, 609, 606, 608, 607, 608, 609, 608, 608, 607, 608, 607, 608, 609, 607, 606, 610, 609, 608, 610];
const mids = [
  ["#ffbe7d", "#59a14f", "#b6992d", "#b6992d", "#b6992d", "#f1ce63", "#86bcb6", "#86bcb6", "#d4a6c8", "#9d7660", "#59a14f", "#59a14f", "#8cd17d", "#499894"],
  ["#ffbe7d", "#8cd17d", "#b6992d", "#b6992d", "#b6992d", "#f1ce63", "#86bcb6", "#86bcb6", "#86bcb6", "#e15759", "#59a14f", "#59a14f", "#8cd17d", "#499894"],
  ["#ffbe7d", "#ffbe7d", "#b6992d", "#b6992d", "#499894", "#86bcb6", "#86bcb6", "#d4a6c8", "#9d7660", "#8cd17d", "#f1ce63", "#86bcb6"]
];
xs.forEach((x, i) => {
  const t = tops[i], foot = feet[i];
  const seg = (y, h, fill) => add("stack", "rect", { x, y, width: 9, height: h, fill });
  seg(t, 1, "#4e79a7"); seg(t + 1, 1, "#a0cbe8"); seg(t + 2, 6, "#f28e2b");
  const m = mids[i % 3], n = foot - t - 8;
  for (let k = 0; k < n; k++) seg(t + 8 + k, 1, m[Math.floor(k * m.length / n)]);
  seg(foot, 614 - foot, "#ff9d9a");
  if (i === 4 || i === 6 || i === 7) seg(613, 1, "#79706e");
  add("stack", "path", { d: `M${x + 11.5} 614v3`, stroke: "#f6f8f8" });
});
[[945, "46"], [970, "35"], [994, "11"], [1019, "30"], [1043, "41"], [1067, "50"], [1092, "40"], [1116, "48"], [1141, "38"], [1165, "39"]]
  .forEach(([x, t]) => label("stack", 0, 0, 14, t, 12.5, "#777", "start", { transform: `translate(${x} 633) rotate(-90)` }));
label("stack", 0, 0, 22, "Null", 12.5, "#999", "start", { transform: "translate(1187 642) rotate(-90)" });

/* Crime type colour legend */
[["KIDNAPPING", "#fabfd2"], ["LIQUOR LAW VIOL..", "#b07aa1"], ["MOTOR VEHICLE ..", "#d4a6c8"], ["NARCOTICS", "#9d7660"], ["NON-CRIMINAL", "#d7b5a6"],
 ["NON-CRIMINAL (S..", "#4e79a7"], ["OBSCENITY", "#a0cbe8"], ["OFFENSE INVOLV..", "#f28e2b"], ["OTHER NARCOTIC..", "#ffbe7d"], ["OTHER OFFENSE", "#59a14f"],
 ["PROSTITUTION", "#8cd17d"], ["PUBLIC INDECEN..", "#b6992d"], ["PUBLIC PEACE VI..", "#f1ce63"], ["ROBBERY", "#499894"], ["SEX OFFENSE", "#86bcb6"],
 ["STALKING", "#e15759"], ["THEFT", "#ff9d9a"], ["WEAPONS VIOLA..", "#79706e"]].forEach(([name, color]) => {
  const row = document.createElement("div");
  row.className = "key";
  const sw = document.createElement("i");
  sw.style.background = color;
  row.append(sw, name);
  document.getElementById("types").appendChild(row);
});
```
